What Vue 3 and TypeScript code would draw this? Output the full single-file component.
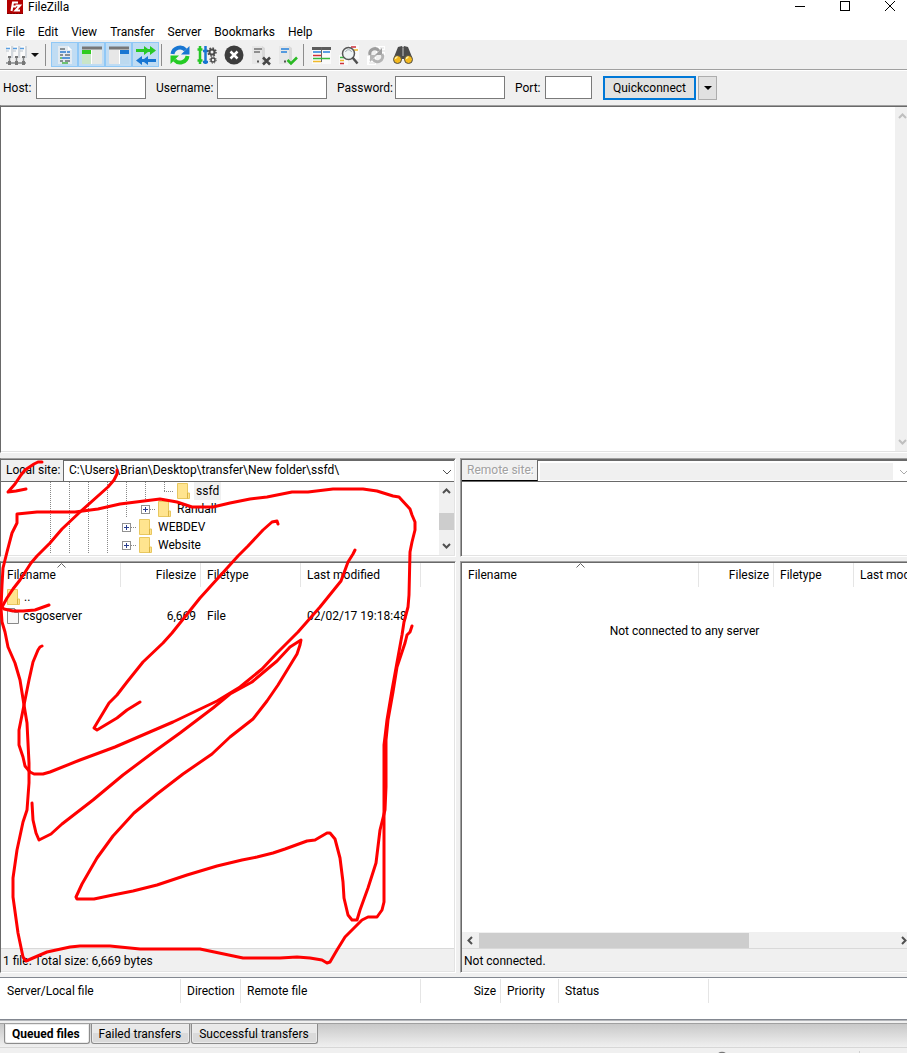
<script setup lang="ts">
import { ref } from 'vue'

interface TreeRow {
  name: string
  guides: number
  expandable: boolean
  selected: boolean
}

const menus: string[] = ['File', 'Edit', 'View', 'Transfer', 'Server', 'Bookmarks', 'Help']

const tree: TreeRow[] = [
  { name: 'ssfd', guides: 6, expandable: false, selected: true },
  { name: 'Randall', guides: 5, expandable: true, selected: false },
  { name: 'WEBDEV', guides: 4, expandable: true, selected: false },
  { name: 'Website', guides: 4, expandable: true, selected: false },
]

const fileColumns: string[] = ['Filename', 'Filesize', 'Filetype', 'Last modified']
const queueColumns: string[] = ['Server/Local file', 'Direction', 'Remote file', 'Size', 'Priority', 'Status']
const tabs: string[] = ['Queued files', 'Failed transfers', 'Successful transfers']
const activeTab = ref('Queued files')

const host = ref('')
const username = ref('')
const password = ref('')
const port = ref('')

const strokes: string[] = [
  '42,462 38,462 34,464 25,470 21,475 15,484 8,492 16,491 26,489',
  '117,470 117,474 114,480 108,487 80,512 62,529 50,543 37,556 31,563 20,580 13,589 7,598 2,607 4,609 13,611 23,611 35,610 49,605',
  '17,514 37,512 75,512 98,509 120,504 160,499 177,502 192,507 213,507 230,503 250,499 267,497 292,492 308,492 333,489 363,489 377,491 393,496 399,497 410,509 412,515 415,522 415,530 412,542 410,552 409,595 408,607 404,622 402,635 398,657 392,690 387,720 385,737 384,745 384,902 382,910 377,917 368,917 362,920 355,927 345,937 337,950 330,962 327,963 322,960 310,958 297,957 280,958 243,958 200,949 140,949 110,946 80,946 70,947 47,952 26,961 23,957 18,933 13,897 13,878 17,850 23,822 27,810 29,783 29,763 27,723 24,705 20,680 15,663 8,647 5,632 2,622 1,608 2,585 3,568 7,552 12,533 17,523 17,514',
  '278,524 277,521 272,522 263,530 248,546 238,556 200,598 172,633 163,643 143,662 127,682 117,695 109,703 94,728 97,730 117,718 127,710 140,702',
  '355,550 353,554 348,562 341,581 320,607 298,632 277,653 262,669 240,687 217,701 173,722 115,747 80,760 50,772 43,774 34,774 30,772 25,766 23,757 19,745 19,730 24,705 29,680 33,662 38,650 40,647 42,646',
  '32,803 33,820 36,833 39,840 43,838 51,834 62,824 93,800 123,775 155,751 180,733 213,708 230,694 252,682 277,661 290,647 301,640 300,645 297,654 278,685 267,701 253,719 230,737 212,754 183,774 157,794 134,813 113,836 97,858 82,884 76,897 77,899 94,899 113,895 133,891 157,885 187,875 217,866 242,860 257,857 273,853 285,849 307,841 315,840 327,833 330,833 335,839 340,858 343,882 344,898 348,915 352,920 357,920 360,910 368,888 376,863 380,830 385,810 386,787 386,740 388,720 393,692 397,667 405,643 407,635 410,632 412,626',
]
</script>

<template>
  <div class="window">
    <header class="titlebar">
      <svg viewBox="0 0 16 14" width="16" height="14" aria-hidden="true">
        <rect width="16" height="14" fill="#b30000" />
        <path d="M4.500 11L6 2.500h5M5 6.500h4" fill="none" stroke="#fff" stroke-width="2" />
        <path d="M8.500 5.500H13L8.500 10.500H13" fill="none" stroke="#fff" stroke-width="2" />
        <path d="M0 13.500h16" stroke="#7e0000" stroke-dasharray="2 1" />
      </svg>
      <span class="title">FileZilla</span>
      <div class="window-buttons">
        <button type="button" aria-label="Minimize">
          <svg viewBox="0 0 10 10" width="10" height="10"><path d="M0 5.500h10" stroke="#000" /></svg>
        </button>
        <button type="button" aria-label="Maximize">
          <svg viewBox="0 0 10 10" width="10" height="10"><rect x=".5" y=".5" width="9" height="9" fill="none" stroke="#000" /></svg>
        </button>
        <button type="button" aria-label="Close">
          <svg viewBox="0 0 10 10" width="10" height="10"><path d="M0 0l10 10M10 0L0 10" stroke="#000" /></svg>
        </button>
      </div>
    </header>

    <nav class="menubar">
      <button v-for="menu in menus" :key="menu" type="button">{{ menu }}</button>
    </nav>

    <div class="toolbar">
      <button type="button" aria-label="Site Manager">
        <svg viewBox="0 0 22 22" width="22" height="22">
          <path d="M2 2h5v11H2zM9 2h5v11H9zM16 2h5v11h-5z" fill="#fafafa" />
          <path d="M6 2h2v12H6zM13 2h2v12h-2zM20 2h2v12h-2z" fill="#d3d8dd" />
          <path d="M1 4.500h4M8 4.500h4M15 4.500h4" stroke="#5b9fe0" stroke-width="1.500" />
          <path d="M1 7h3M8 7h3M15 7h3" stroke="#b9c2ca" />
          <path d="M4.500 13v5M11.500 13v5M18.500 13v5M1 19h20" fill="none" stroke="#85898b" stroke-width="1.500" />
          <path d="M3 17h3v4H3zM10 17h3v4h-3zM17 17h3v4h-3zM3 12h3v2H3zM10 12h3v2h-3zM17 12h3v2h-3z" fill="#777" />
        </svg>
      </button>
      <button type="button" class="narrow" aria-label="Site Manager list">
        <svg viewBox="0 0 8 4" width="8" height="4"><path d="M0 0h8L4 4z" fill="#111" /></svg>
      </button>
      <i class="separator wide"></i>
      <button type="button" class="pressed" aria-label="Toggle message log">
        <svg viewBox="0 0 22 22" width="22" height="22">
          <path d="M4 2h10l4 4v14H4z" fill="#e2eaf1" /><path d="M14 2l4 4h-4z" fill="#fff" />
          <path d="M6 5h5M6 11h3M11 11h5M6 17h3M11 17h5" stroke="#6a7175" stroke-width="1.500" />
          <path d="M6 8h6M13 8h3M8 14h8" stroke="#287bd0" stroke-width="1.500" />
          <path d="M6 14h2M8 19h6" stroke="#48b548" stroke-width="1.500" />
        </svg>
      </button>
      <button type="button" class="pressed" aria-label="Toggle local directory tree">
        <svg viewBox="0 0 22 22" width="22" height="22">
          <rect x="1" y="3" width="20" height="17" rx="1" fill="#e5e8e5" /><rect x="1" y="7" width="9" height="13" fill="#c9e5c8" />
          <path d="M1 4h20" stroke="#777" stroke-width="3" /><rect x="1" y="6" width="9" height="4" fill="#2ecb20" />
          <path d="M10.500 6v14" stroke="#fff" />
        </svg>
      </button>
      <button type="button" class="pressed" aria-label="Toggle remote directory tree">
        <svg viewBox="0 0 22 22" width="22" height="22">
          <rect x="1" y="3" width="20" height="17" rx="1" fill="#e7e7e7" /><rect x="12" y="7" width="9" height="13" fill="#bcd9ef" />
          <path d="M1 4h20" stroke="#777" stroke-width="3" /><rect x="12" y="6" width="9" height="4" fill="#1876d2" />
          <path d="M11.500 6v14" stroke="#fff" />
        </svg>
      </button>
      <button type="button" class="pressed" aria-label="Toggle transfer queue">
        <svg viewBox="0 0 22 22" width="22" height="22">
          <path d="M1 5h8V2l4 3h2V2l6 4.500L15 11V8h-2l-4 3V8H1z" fill="#27c926" />
          <path d="M21 15h-8v-3l-4 3H7v-3l-6 4.500L7 21v-3h2l4 3v-3h8z" fill="#1876d2" />
        </svg>
      </button>
      <i class="separator"></i>
      <button type="button" aria-label="Refresh">
        <svg viewBox="0 0 22 22" width="22" height="22">
          <path d="M3.500 10a7.500 7.500 0 0 1 13-4" fill="none" stroke="#1876d2" stroke-width="4" /><path d="M20.500 2v8.500h-8.500z" fill="#1876d2" />
          <path d="M18.500 12a7.500 7.500 0 0 1-13 4" fill="none" stroke="#24cb24" stroke-width="4" /><path d="M1.500 20v-8.500H10z" fill="#24cb24" />
        </svg>
      </button>
      <button type="button" aria-label="Process queue">
        <svg viewBox="0 0 22 22" width="22" height="22">
          <path d="M4 2v18M1.500 5.500h5M1.500 16.500h5" stroke="#27c727" stroke-width="2.500" />
          <path d="M9.500 2v18M7 7h5M7 18h5" stroke="#1876d2" stroke-width="2.500" />
          <g fill="none" stroke="#4b4b4b"><circle cx="16" cy="8" r="2.500" stroke-width="2" /><circle cx="16" cy="8" r="4" stroke-width="1.500" stroke-dasharray="1.600 1.540" /><circle cx="17" cy="16" r="2" stroke-width="1.500" /><circle cx="17" cy="16" r="3.200" stroke-dasharray="1.300 1.210" /></g>
        </svg>
      </button>
      <button type="button" aria-label="Cancel">
        <svg viewBox="0 0 22 22" width="22" height="22"><circle cx="11" cy="11" r="9.500" fill="#3d3d3d" /><path d="M7.500 7.500l7 7M14.500 7.500l-7 7" stroke="#fff" stroke-width="2.500" /></svg>
      </button>
      <button type="button" aria-label="Disconnect">
        <svg viewBox="0 0 22 22" width="22" height="22">
          <path d="M11 2h1l3 2v16h-4z" fill="#d9d9d9" /><path d="M2 2h10v18H2z" fill="#e7e7e7" /><path d="M4 5h8M4 8h6" stroke="#737373" stroke-width="1.500" /><path d="M7 17.500h2" stroke="#555" stroke-width="2" />
          <path d="M13 13.500l7 7M20 13.500l-7 7" stroke="#484848" stroke-width="2.500" />
        </svg>
      </button>
      <button type="button" aria-label="Reconnect">
        <svg viewBox="0 0 22 22" width="22" height="22">
          <path d="M11 2h1l3 2v16h-4z" fill="#d9d9d9" /><path d="M2 2h10v18H2z" fill="#e7e7e7" /><path d="M4 5h8M4 8h6" stroke="#2681db" stroke-width="1.500" /><path d="M7 17.500h2" stroke="#555" stroke-width="2" />
          <path d="M10.500 16l3.500 3.500 6-6" fill="none" stroke="#2aba24" stroke-width="2.500" />
        </svg>
      </button>
      <i class="separator"></i>
      <button type="button" aria-label="Directory comparison">
        <svg viewBox="0 0 22 22" width="22" height="22">
          <rect x="1" y="3" width="9" height="17" fill="#fafafa" /><rect x="11" y="3" width="9" height="17" fill="#fafafa" />
          <path d="M1 4.500h19" stroke="#5c5c5c" stroke-width="3" /><path d="M10.500 3v15" stroke="#666" />
          <path d="M2 8h8M12 8h7" stroke="#2681dc" stroke-width="1.500" /><path d="M2 11.500h8" stroke="#d32f38" stroke-width="1.500" /><path d="M2 14.500h17" stroke="#35b83d" stroke-width="1.500" /><path d="M2 17.500h8" stroke="#f1ba2b" stroke-width="1.500" />
        </svg>
      </button>
      <button type="button" aria-label="Filename filters">
        <svg viewBox="0 0 22 22" width="22" height="22">
          <path d="M11 1h10v14H11zM1 11h9v10H1z" fill="#fafafa" /><path d="M13 3h5M2 19.500h4" stroke="#ce303a" stroke-width="1.500" /><path d="M16 6h4M2 16.500h4" stroke="#eebc2c" stroke-width="1.500" /><path d="M2 13.500h5" stroke="#3ab63e" stroke-width="1.500" />
          <circle cx="10.500" cy="9.500" r="6" fill="#eef3f4" stroke="#565656" stroke-width="1.500" /><path d="M7.500 8c1-3 5-3 6 0" fill="none" stroke="#9aa5a9" /><path d="M14.500 13.500l5 6" stroke="#505050" stroke-width="2.500" />
        </svg>
      </button>
      <button type="button" aria-label="Synchronized browsing">
        <svg viewBox="0 0 22 22" width="22" height="22">
          <path d="M11 2h9v9h-9zM2 12h9v9H2z" fill="#fff" /><path d="M15 4h4M17 7h3M4 16h4M4 19h6" stroke="#ddd" />
          <path d="M5 11a5 5 0 0 1 9-4" fill="none" stroke="#9d9d9d" stroke-width="3" /><path d="M17 4v7h-7z" fill="#a0a0a0" /><path d="M17 10a5 5 0 0 1-9 5" fill="none" stroke="#b4b4b4" stroke-width="3" /><path d="M5 18v-7h7z" fill="#b5b5b5" />
        </svg>
      </button>
      <button type="button" aria-label="Search remote files">
        <svg viewBox="0 0 22 22" width="22" height="22">
          <path d="M6 3l4-1 1 2 1-2 4 1 4 10-6 5-2-3h-2l-2 3-6-5z" fill="#4b4b4b" /><path d="M10 4v8h2V4" fill="#888" />
          <circle cx="5.500" cy="15.500" r="4" fill="#f4b91e" stroke="#4d4d4d" /><circle cx="16.500" cy="15.500" r="4" fill="#f4b91e" stroke="#4d4d4d" /><path d="M3.500 15a2 2 0 0 1 2-2M14.500 15a2 2 0 0 1 2-2" fill="none" stroke="#fff0a5" stroke-width="1.500" />
        </svg>
      </button>
    </div>

    <form class="quickconnect" @submit.prevent>
      <label class="leading" for="host">Host:</label>
      <input id="host" v-model="host" type="text" />
      <label for="username">Username:</label>
      <input id="username" v-model="username" type="text" />
      <label for="password">Password:</label>
      <input id="password" v-model="password" type="password" />
      <label for="port">Port:</label>
      <input id="port" v-model="port" type="text" />
      <button type="submit" class="connect">Quickconnect</button>
      <button type="button" class="history" aria-label="Quickconnect history">
        <svg viewBox="0 0 8 4" width="8" height="4"><path d="M0 0h8L4 4z" fill="#000" /></svg>
      </button>
    </form>

    <section class="log" aria-label="Message log">
      <div class="vscroll disabled">
        <svg viewBox="0 0 9 6" width="9" height="6"><path d="M1 5l3.500-3.500L8 5" /></svg>
        <svg viewBox="0 0 9 6" width="9" height="6"><path d="M1 1l3.500 3.500L8 1" /></svg>
      </div>
    </section>

    <main class="sites">
      <section class="site">
        <div class="panel tree-panel">
          <div class="site-row">
            <label for="local-site">Local site:</label>
            <div class="combo">
              <select id="local-site"><option>C:\Users\Brian\Desktop\transfer\New folder\ssfd\</option></select>
              <svg viewBox="0 0 10 6" width="10" height="6"><path d="M1 1l4 4 4-4" /></svg>
            </div>
          </div>
          <div class="tree-area">
            <ul class="tree">
              <li v-for="row in tree" :key="row.name">
                <span v-for="n in row.guides" :key="n" class="guide"></span>
                <span class="branch" :class="{ elbow: !row.expandable }">
                  <svg v-if="row.expandable" viewBox="0 0 9 9" width="9" height="9"><rect x=".5" y=".5" width="8" height="8" fill="#fff" stroke="#919191" /><path d="M2 4.500h5M4.500 2v5" stroke="#2a3f8f" /></svg>
                </span>
                <svg viewBox="0 0 13 16" width="13" height="16"><path d="M.5.5h10v9.500h2v5.500H.5z" fill="#ffe48f" stroke="#e8c75f" /><path d="M10.500 10v5.500" stroke="#d9b343" /></svg>
                <span class="node" :class="{ selected: row.selected }">{{ row.name }}</span>
              </li>
            </ul>
            <div class="vscroll">
              <svg viewBox="0 0 9 6" width="9" height="6"><path d="M1 5l3.500-3.500L8 5" /></svg>
              <span class="thumb"></span>
              <svg viewBox="0 0 9 6" width="9" height="6"><path d="M1 1l3.500 3.500L8 1" /></svg>
            </div>
          </div>
        </div>
        <div class="panel list-panel">
          <div class="list">
            <table class="files">
              <colgroup><col class="w120" /><col class="w80" /><col class="w100" /><col class="w120" /><col /></colgroup>
              <thead>
                <tr>
                  <th v-for="(column, i) in fileColumns" :key="column" :class="{ number: i === 1 }">
                    <svg v-if="i === 0" class="sort" viewBox="0 0 9 5" width="9" height="5"><path d="M.5 4.500l4-4 4 4" /></svg>{{ column }}
                  </th>
                  <td></td>
                </tr>
              </thead>
              <tbody>
                <tr>
                  <td colspan="5"><span class="entry"><svg viewBox="0 0 13 16" width="13" height="16"><path d="M.5.5h10v9.500h2v5.500H.5z" fill="#ffe48f" stroke="#e8c75f" /><path d="M10.500 10v5.500" stroke="#d9b343" /></svg>..</span></td>
                </tr>
                <tr>
                  <td><span class="entry"><svg viewBox="0 0 12 16" width="12" height="16"><path d="M.5.5h7l4 4v11H.5z" fill="#f7f7f7" stroke="#888" /><path d="M7.500.5v4h4" fill="none" stroke="#888" /></svg>csgoserver</span></td>
                  <td class="number">6,669</td>
                  <td>File</td>
                  <td>02/02/17 19:18:48</td>
                  <td></td>
                </tr>
              </tbody>
            </table>
          </div>
          <footer class="summary">1 file. Total size: 6,669 bytes</footer>
        </div>
      </section>

      <section class="site remote">
        <div class="panel tree-panel">
          <div class="site-row disabled">
            <label for="remote-site">Remote site:</label>
            <div class="combo">
              <select id="remote-site" disabled></select>
              <svg viewBox="0 0 10 6" width="10" height="6"><path d="M1 1l4 4 4-4" /></svg>
            </div>
          </div>
          <div class="tree-area"></div>
        </div>
        <div class="panel list-panel">
          <div class="list">
            <table class="files remote-files">
              <colgroup><col class="w237" /><col class="w75" /><col class="w80" /><col class="w120" /></colgroup>
              <thead>
                <tr>
                  <th v-for="(column, i) in fileColumns" :key="column" :class="{ number: i === 1 }">
                    <svg v-if="i === 0" class="sort" viewBox="0 0 9 5" width="9" height="5"><path d="M.5 4.500l4-4 4 4" /></svg>{{ column }}
                  </th>
                </tr>
              </thead>
            </table>
            <p class="empty">Not connected to any server</p>
          </div>
          <div class="hscroll">
            <svg viewBox="0 0 6 9" width="6" height="9"><path d="M5 1L1.500 4.500 5 8" /></svg>
            <div class="track"><span class="thumb"></span></div>
            <svg viewBox="0 0 6 9" width="6" height="9"><path d="M1 1l3.500 3.500L1 8" /></svg>
          </div>
          <footer class="summary">Not connected.</footer>
        </div>
      </section>
    </main>

    <section class="queue">
      <table class="files">
        <colgroup><col class="w180" /><col class="w60" /><col class="w180" /><col class="w80" /><col class="w58" /><col class="w150" /><col /></colgroup>
        <thead>
          <tr>
            <th v-for="column in queueColumns" :key="column" :class="{ number: column === 'Size' }">{{ column }}</th>
            <td></td>
          </tr>
        </thead>
      </table>
    </section>

    <div class="tabs" role="tablist">
      <button v-for="tab in tabs" :key="tab" type="button" role="tab" :aria-selected="tab === activeTab" :class="{ active: tab === activeTab }" @click="activeTab = tab">{{ tab }}</button>
    </div>

    <footer class="statusbar">
      <svg viewBox="0 0 14 14" width="14" height="14" aria-hidden="true"><circle cx="7" cy="7" r="5.500" fill="#ddd" stroke="#777" stroke-width="1.500" /></svg>
      <i></i>
    </footer>

    <svg class="ink" viewBox="0 0 907 1053" width="907" height="1053" aria-hidden="true">
      <polyline v-for="(points, i) in strokes" :key="i" :points="points" />
    </svg>
  </div>
</template>

<style>
body {
  margin: 0;
}
</style>

<style scoped>
.window {
  position: relative;
  display: flex;
  flex-direction: column;
  height: 100vh;
  overflow: hidden;
  background: #f0f0f0;
  color: #000;
  font: 12px/16px Roboto, "Liberation Sans", sans-serif;
  white-space: nowrap;
}
.window * {
  box-sizing: border-box;
}
button,
input,
select {
  margin: 0;
  padding: 0;
  border: 0;
  border-radius: 0;
  background: none;
  color: inherit;
  font: inherit;
}
svg {
  display: block;
  flex: none;
}

.titlebar {
  display: flex;
  flex: none;
  align-items: flex-start;
  height: 22px;
  padding: 0 12px 0 7px;
  background: #fff;
}
.title {
  margin-left: 5px;
  line-height: 14px;
}
.window-buttons {
  display: flex;
  gap: 35px;
  margin: 1px 0 0 auto;
}

.menubar {
  display: flex;
  flex: none;
  gap: 13px;
  height: 18px;
  padding-left: 6px;
  background: #fff;
}
.menubar button {
  line-height: 20px;
}

.toolbar {
  display: flex;
  flex: none;
  align-items: flex-start;
  height: 31px;
  padding: 2px 0 0 2px;
  border-bottom: 1px solid #fff;
  box-shadow: inset 0 -1px #a0a0a0;
}
.toolbar button {
  display: flex;
  align-items: center;
  justify-content: center;
  width: 27px;
  height: 25px;
}
.toolbar .narrow {
  width: 12px;
}
.toolbar .pressed {
  background: #c0dcf3;
  border: 1px solid #90c8f6;
}
.separator {
  width: 1px;
  height: 22px;
  margin: 2px 4px 0 2px;
  background: #8d8d8d;
}
.separator.wide {
  margin: 2px 5px 0 4px;
}

.quickconnect {
  display: grid;
  flex: none;
  grid-template-columns: 36px 110px 71px 110px 68px 110px 40px 47px 104px 21px;
  align-items: start;
  height: 34px;
  padding-top: 5px;
}
.quickconnect label {
  padding-left: 10px;
  line-height: 24px;
}
.quickconnect label.leading {
  padding-left: 3px;
}
.quickconnect input {
  width: 100%;
  height: 23px;
  padding: 0 4px;
  border: 1px solid #7a7a7a;
  background: #fff;
}
.connect {
  height: 24px;
  margin-left: 11px;
  border: 2px solid #0078d7;
  background: #e1e1e1;
}
.history {
  display: flex;
  align-items: center;
  justify-content: center;
  height: 24px;
  margin-left: 2px;
  border: 1px solid #adadad;
  background: #e1e1e1;
}

.log {
  display: flex;
  flex: 346 1 0;
  justify-content: flex-end;
  margin-bottom: 5px;
  border-top: 1px solid #a0a0a0;
  border-left: 1px solid #696969;
  border-bottom: 1px solid #fff;
  background: #fff;
  box-shadow: inset 0 1px #696969, inset 0 -1px #e3e3e3;
}
.vscroll {
  display: flex;
  flex-direction: column;
  flex: none;
  align-items: center;
  justify-content: space-between;
  width: 15px;
  padding: 6px 0;
  background: #f0f0f0;
  stroke: #505050;
  stroke-width: 2;
  fill: none;
}
.vscroll .thumb {
  width: 15px;
  height: 17px;
  margin-top: 6px;
  background: #cdcdcd;
}
.vscroll.disabled {
  width: 12px;
  margin: 1px 0;
  padding: 6px 0 6px 2px;
  stroke: #bfbfbf;
}

.sites {
  display: flex;
  flex: 515 1 0;
  gap: 4px;
  min-height: 0;
}
.site {
  display: flex;
  flex: 456 1 0;
  flex-direction: column;
  gap: 4px;
  min-width: 0;
}
.site.remote {
  flex-grow: 447;
}
.panel {
  display: flex;
  flex-direction: column;
  min-height: 0;
  border-top: 1px solid #a0a0a0;
  border-left: 1px solid #696969;
  border-right: 1px solid #fff;
  border-bottom: 1px solid #fff;
  background: #fff;
  box-shadow: inset 0 1px #696969, inset -1px -1px #e3e3e3;
}
.tree-panel {
  flex: none;
  height: 99px;
  padding: 1px 1px 1px 0;
}
.list-panel {
  flex: 1;
  padding: 1px 1px 1px 0;
}
.remote .panel {
  padding: 1px 0 1px 1px;
  border-left-color: #a0a0a0;
  border-right: 0;
  box-shadow: inset 1px 1px #696969, inset 0 -1px #e3e3e3;
}
.site-row {
  display: flex;
  flex: none;
  height: 22px;
  border-bottom: 1px solid #696969;
}
.site-row label {
  width: 63px;
  padding-left: 5px;
  border-right: 1px solid #696969;
  background: #f0f0f0;
  line-height: 20px;
}
.site-row .combo {
  position: relative;
  flex: 1;
  min-width: 0;
  border-top: 1px solid #696969;
}
.combo select {
  width: 100%;
  height: 18px;
  padding: 0 20px 0 5px;
  appearance: none;
  line-height: 18px;
}
.combo svg {
  position: absolute;
  top: 8px;
  right: 2px;
  stroke: #505050;
  fill: none;
}
.site-row.disabled label {
  width: 76px;
  color: #a0a0a0;
  text-shadow: 1px 1px #fff;
  border-bottom: 1px solid #000;
}
.site-row.disabled .combo {
  padding: 2px 14px 0 2px;
}
.site-row.disabled select {
  display: block;
  height: 17px;
  background: #f0f0f0;
  opacity: 1;
}
.site-row.disabled svg {
  right: -2px;
  stroke: #aaa;
}

.tree-area {
  display: flex;
  flex: 1;
  min-height: 0;
}
.tree {
  flex: 1;
  margin: 0;
  padding: 0 0 0 49px;
  list-style: none;
}
.tree li {
  display: flex;
  align-items: center;
  height: 18px;
}
.guide {
  width: 19px;
  height: 18px;
  background: repeating-linear-gradient(#888 0 1px, transparent 1px 2px) 0 0 / 1px 100% no-repeat;
}
.branch {
  display: flex;
  align-items: center;
  width: 14px;
  height: 18px;
  margin: 0 3px 0 -4px;
  background: repeating-linear-gradient(90deg, #888 0 1px, transparent 1px 2px) 9px 9px / 9px 1px no-repeat;
}
.branch.elbow {
  background:
    repeating-linear-gradient(#888 0 1px, transparent 1px 2px) 4px 0 / 1px 10px no-repeat,
    repeating-linear-gradient(90deg, #888 0 1px, transparent 1px 2px) 4px 9px / 12px 1px no-repeat;
}
.node {
  margin-left: 4px;
  padding: 0 2px;
  line-height: 18px;
}
.node.selected {
  background: #f0f0f0;
}

.list {
  flex: 1;
  min-height: 0;
  overflow: hidden;
}
.files {
  width: 100%;
  table-layout: fixed;
  border-collapse: separate;
  border-spacing: 0;
}
.remote-files {
  width: 512px;
}
.files th,
.files td {
  height: 19px;
  padding: 0 5px 0 6px;
  font-weight: 400;
  text-align: left;
}
.files thead th {
  position: relative;
  height: 24px;
  padding-right: 4px;
  border-right: 1px solid #e5e5e5;
}
.files .number {
  text-align: right;
}
.sort {
  position: absolute;
  top: 0;
  left: calc(50% - 4px);
  stroke: #666;
  fill: none;
}
.entry {
  display: flex;
  align-items: center;
  gap: 4px;
}
.w58 { width: 58px; }
.w60 { width: 60px; }
.w75 { width: 75px; }
.w80 { width: 80px; }
.w100 { width: 100px; }
.w120 { width: 120px; }
.w150 { width: 150px; }
.w180 { width: 180px; }
.w237 { width: 237px; }
.empty {
  margin: 36px 0 0;
  text-align: center;
}
.hscroll {
  display: flex;
  flex: none;
  align-items: center;
  height: 16px;
  padding-left: 5px;
  background: #f0f0f0;
  stroke: #505050;
  stroke-width: 2;
  fill: none;
}
.track {
  flex: 1;
  height: 15px;
  padding-left: 6px;
}
.track .thumb {
  display: block;
  width: 64%;
  height: 15px;
  background: #cdcdcd;
}
.summary {
  flex: none;
  height: 23px;
  padding-left: 2px;
  border-top: 1px solid #d9d9d9;
  background: #f0f0f0;
  line-height: 24px;
}

.queue {
  flex: none;
  height: 46px;
  margin-top: 4px;
  padding-left: 1px;
  border-top: 1px solid #828790;
  background: linear-gradient(#fff 41px, #828790 41px 42px, #b4b6ba 42px 43px, #f0f0f0 43px);
}
.queue .files {
  margin-top: 1px;
}
.tabs {
  display: flex;
  flex: none;
  align-items: flex-start;
  gap: 1px;
  height: 24px;
  padding-left: 4px;
  border-top: 1px solid #a0a0a0;
  background: linear-gradient(#c8c8c8, #f0f0f0);
}
.tabs button {
  height: 20px;
  padding: 0 8px 0 7px;
  border: 1px solid #8c8c8c;
  border-top: 0;
  border-radius: 0 0 3px 3px;
  background: linear-gradient(#e9e9e9 9px, #dadada 9px);
  box-shadow: inset 0 0 0 1px #ebebeb;
  line-height: 16px;
}
.tabs .active {
  padding-right: 9px;
  background: #fff;
  font-weight: 700;
}
.statusbar {
  display: flex;
  flex: none;
  justify-content: flex-end;
  height: 6px;
  padding: 3px 47px 0 0;
  border-top: 1px solid #d7d7d7;
  overflow: hidden;
}
.statusbar i {
  width: 1px;
  height: 6px;
  margin-left: 130px;
  background: #d0d0d0;
}

.ink {
  position: absolute;
  top: 0;
  left: 0;
  fill: none;
  stroke: #f00;
  stroke-width: 3;
  stroke-linecap: round;
  stroke-linejoin: round;
  pointer-events: none;
}
</style>
